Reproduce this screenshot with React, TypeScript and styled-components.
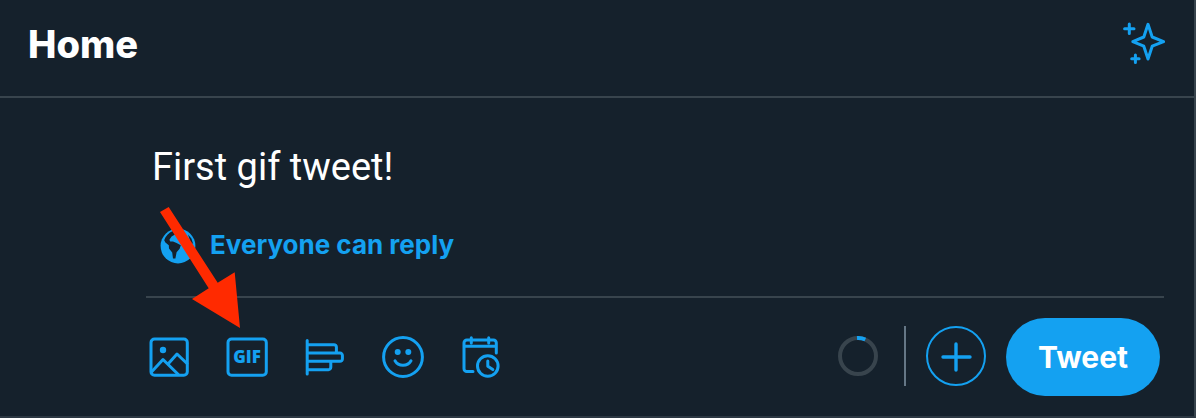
import React from "react";
import styled, { createGlobalStyle } from "styled-components";

const BLUE = "#14a1f1";
const LINE = "#38444d";
const NIGHT = "#15212c";

const GlobalStyle = createGlobalStyle`
  *, *::before, *::after { box-sizing: border-box; }
  html { background: ${NIGHT}; }
  body {
    margin: 0;
    background: ${NIGHT};
    font-family: Inter, "Liberation Sans", sans-serif;
  }
`;

const Column = styled.main`
  position: relative;
  border-right: 2px solid ${LINE};
  border-bottom: 2px solid #2c3843;
`;

const Header = styled.header`
  display: flex;
  align-items: center;
  justify-content: space-between;
  padding: 18px 26px 30px 28px;
  border-bottom: 2px solid ${LINE};
`;

const Title = styled.h1`
  margin: 0;
  color: #fff;
  font-size: 38px;
  font-weight: 800;
  line-height: 48px;
  padding-top: 2px;
  margin-bottom: -2px;
`;

const PlainButton = styled.button`
  display: flex;
  flex: none;
  align-items: center;
  padding: 0;
  border: 0;
  background: none;
  color: ${BLUE};
  font: inherit;
  cursor: pointer;
`;

const Composer = styled.form`
  padding: 44px 30px 20px 146px;
`;

const TweetInput = styled.input`
  display: block;
  width: 100%;
  height: 50px;
  padding: 0 6px;
  border: 0;
  outline: 0;
  background: none;
  color: #fff;
  font: 400 38px/50px Roboto, "Liberation Sans", sans-serif;
`;

const ReplyButton = styled(PlainButton)`
  gap: 14px;
  margin: 34px 0 30px 14px;
  font-size: 26px;
  font-weight: 700;
  line-height: 40px;
`;

const ReplyLabel = styled.span`
  padding-bottom: 2px;
  line-height: 38px;
`;

const Toolbar = styled.div`
  display: flex;
  align-items: center;
  justify-content: space-between;
  padding: 20px 4px 0 0;
  border-top: 2px solid ${LINE};
`;

const Tools = styled.div`
  display: flex;
  gap: 32px;
`;

const Actions = styled.div`
  display: flex;
  align-items: center;
  gap: 20px;
`;

const Status = styled.div`
  display: flex;
  align-items: center;
  gap: 20px;
  padding-bottom: 2px;
`;

const Separator = styled.span`
  width: 2px;
  height: 60px;
  margin-left: 6px;
  background: #657786;
`;

const AddButton = styled(PlainButton)`
  justify-content: center;
  width: 60px;
  height: 60px;
  border: 2px solid ${BLUE};
  border-radius: 50%;
`;

const SubmitButton = styled.button`
  padding: 20px 32px;
  border: 0;
  border-radius: 40px;
  background: ${BLUE};
  color: #fff;
  font: 700 30px/38px Inter, "Liberation Sans", sans-serif;
  cursor: pointer;
`;

const Pointer = styled.svg`
  position: absolute;
  left: 158px;
  top: 204px;
  pointer-events: none;
`;

const Stroke = styled.svg`
  display: block;
  fill: none;
  stroke: currentColor;
  stroke-width: 3;
  stroke-linecap: round;
  stroke-linejoin: round;
`;

const GifLabel = styled.text`
  fill: currentColor;
  stroke: none;
  font: 800 17px "Open Sans", Inter, sans-serif;
  text-anchor: middle;
`;

function Icon({ size = 46, children }: { size?: number; children: React.ReactNode }) {
  return (
    <Stroke width={size} height={size} viewBox={`0 0 ${size} ${size}`} aria-hidden="true">
      {children}
    </Stroke>
  );
}

const tools = [
  {
    label: "Add photos or video",
    art: (
      <>
        <rect x="5" y="5" width="36.3" height="36.3" rx="3.5" />
        <circle cx="17" cy="16" r="3.2" fill="currentColor" stroke="none" />
        <path d="M5.7 37.7 17 25.5 32.3 40.5M22.7 29.3 31 20 41 29.5" />
      </>
    ),
  },
  {
    label: "Add a GIF",
    art: (
      <>
        <rect x="4" y="5" width="38.3" height="36.3" rx="3.5" />
        <GifLabel x="23" y="29">GIF</GifLabel>
      </>
    ),
  },
  {
    label: "Add poll",
    art: (
      <path d="M5.2 6.5V40M5.2 10.7H32a2.4 2.4 0 0 1 2.4 2.4V19M5.2 19H38a2.4 2.4 0 0 1 2.4 2.4v3.5a2.4 2.4 0 0 1-2.4 2.4H5.2M28.8 27.3v6a2.4 2.4 0 0 1-2.4 2.4H5.2" />
    ),
  },
  {
    label: "Add emoji",
    art: (
      <>
        <circle cx="23" cy="23" r="19.4" />
        <g fill="currentColor" stroke="none">
          <circle cx="17.7" cy="18" r="3" />
          <circle cx="28.3" cy="18" r="3" />
        </g>
        <path d="M15 26.8C18.4 32.8 27.6 32.8 31 26.8" />
      </>
    ),
  },
  {
    label: "Schedule",
    art: (
      <>
        <path d="M15 37.5H8.8A2.8 2.8 0 0 1 6 34.7V8.8A2.8 2.8 0 0 1 8.8 6h26.7a2.8 2.8 0 0 1 2.8 2.8V19M6 12.3H38.3M13.3 3.7V9M30.7 3.7V9" />
        <circle cx="29.8" cy="32" r="10.3" />
        <path d="M29.8 27V32.3L34.8 35.6" />
      </>
    ),
  },
];

export default function App() {
  return (
    <>
      <GlobalStyle />
      <Column>
        <Header>
          <Title>Home</Title>
          <PlainButton type="button" aria-label="Top Tweets">
            <Icon size={48}>
              <path d="M28 6.3 32.2 19 43.6 23.6 32.2 28.2 28 41 23.8 28.2 12.8 23.6 23.8 19Z" />
              <path d="M9.3 6v9.4M4.6 10.7H14M15.4 37v7.4M11.7 40.7h7.4" />
            </Icon>
          </PlainButton>
        </Header>
        <Composer onSubmit={(e) => e.preventDefault()}>
          <TweetInput aria-label="Tweet text" defaultValue="First gif tweet!" />
          <ReplyButton type="button">
            <svg width="36" height="36" viewBox="0 0 36 36" aria-hidden="true">
              <circle cx="18" cy="18" r="17.4" fill="currentColor" />
              <path
                fill={NIGHT}
                d="M4.2 12.2C5.6 8 8.6 4.6 13 2.9L16 2.4 15 6.4 11.6 8.6 9.4 11.8 10.2 13.6 13 13.4 16.6 15 20.8 17.2 19.6 20.8 16.6 24.2 15.4 30.4H13L12.2 24.6 9 20.6 8.8 17.2 5.4 14.4Z M28 6.4 31.4 10.4 33.2 16 30.6 14.2Z"
              />
            </svg>
            <ReplyLabel>Everyone can reply</ReplyLabel>
          </ReplyButton>
          <Toolbar>
            <Tools>
              {tools.map((tool) => (
                <PlainButton key={tool.label} type="button" aria-label={tool.label}>
                  <Icon>{tool.art}</Icon>
                </PlainButton>
              ))}
            </Tools>
            <Actions>
              <Status>
                <svg width="40" height="40" viewBox="0 0 40 40" fill="none" strokeWidth="4" role="img" aria-label="Characters used">
                  <circle cx="20" cy="20" r="18" stroke={LINE} />
                  <path d="M19 2.03A18 18 0 0 1 27.3 3.5" stroke={BLUE} />
                </svg>
                <Separator />
                <AddButton type="button" aria-label="Add another Tweet">
                  <Icon size={32}>
                    <path d="M16 4v26M3 17h27" strokeWidth="3.4" />
                  </Icon>
                </AddButton>
              </Status>
              <SubmitButton type="submit">Tweet</SubmitButton>
            </Actions>
          </Toolbar>
        </Composer>
        <Pointer width="84" height="126" viewBox="0 0 84 126" aria-hidden="true">
          <path fill="#ff2a00" d="M2 8 10.7 3 59.7 78.7 76.7 68.3 82 124 34 95 50.7 84.3Z" />
        </Pointer>
      </Column>
    </>
  );
}
